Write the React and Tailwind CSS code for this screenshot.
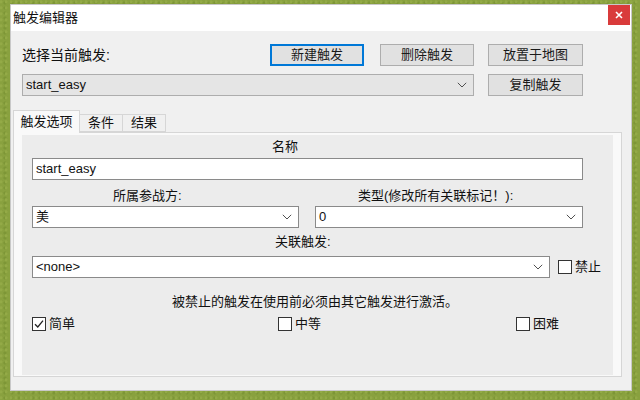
import React from 'react'

const font = "font-['Liberation_Sans','Noto_Sans_CJK_SC',sans-serif]"

function Chevron() {
  return (
    <svg width="10" height="6" viewBox="0 0 10 6" className="shrink-0">
      <path d="M0.8 0.8L5 5L9.2 0.8" stroke="#505050" strokeWidth="1" fill="none" />
    </svg>
  )
}

function Button({ children, focused, className = '' }) {
  return (
    <div
      className={`h-[22px] flex items-center justify-center text-[13px] text-[#1a1a1a] bg-[#e1e1e1] border ${
        focused ? 'border-[#0078d7] shadow-[inset_0_0_0_1px_#0078d7]' : 'border-[#adadad]'
      } ${className}`}
    >
      {children}
    </div>
  )
}

function Select({ value, className = '', gray }) {
  return (
    <div
      className={`h-[22px] flex items-center justify-between pl-[3px] pr-[6px] border text-[13px] text-[#111] ${
        gray ? 'bg-[#e5e5e5] border-[#adadad]' : 'bg-white border-[#8a8a8a]'
      } ${className}`}
    >
      <span>{value}</span>
      <Chevron />
    </div>
  )
}

function Check({ label, checked, className = '' }) {
  return (
    <div className={`flex items-center gap-[3px] ${className}`}>
      <div className="w-[14px] h-[14px] border border-[#333] bg-white flex items-center justify-center">
        {checked && (
          <svg width="12" height="12" viewBox="0 0 12 12">
            <path d="M2 6.2L4.8 9L10 2.6" stroke="#222" strokeWidth="1.3" fill="none" />
          </svg>
        )}
      </div>
      <span className="text-[13px] text-[#111] leading-[16px]">{label}</span>
    </div>
  )
}

export default function App() {
  return (
    <div
      className={`w-[640px] h-[400px] overflow-hidden pt-[4px] pl-[10px] bg-[#89a13f] ${font}`}
      style={{
        backgroundImage:
          'radial-gradient(circle at 20% 30%, #93aa47 0 1px, transparent 2px), radial-gradient(circle at 70% 60%, #7d9636 0 1px, transparent 2px)',
        backgroundSize: '5px 6px, 7px 5px',
      }}
    >
      <div className="w-[622px] h-[387px] bg-[#f0f0f0] border border-[#c8c8c8] flex flex-col">
        {/* Title bar */}
        <div className="h-[26px] bg-white flex items-start justify-between">
          <span className="pl-[2px] pt-[5px] text-[13px] text-[#111] leading-[16px]">触发编辑器</span>
          <div className="mr-[1px] w-[22px] h-[20px] bg-[#d93b3b] flex items-center justify-center">
            <svg width="8" height="8" viewBox="0 0 8 8">
              <path d="M1 1L7 7M7 1L1 7" stroke="#fff" strokeWidth="1.6" />
            </svg>
          </div>
        </div>

        {/* Top controls */}
        <div className="pl-[11px] pt-[13px]">
          <div className="flex items-center">
            <div className="w-[248px] text-[14px] text-[#111]">选择当前触发:</div>
            <Button focused className="w-[94px]">新建触发</Button>
            <Button className="w-[94px] ml-[16px]">删除触发</Button>
            <Button className="w-[95px] ml-[14px]">放置于地图</Button>
          </div>
          <div className="flex items-center mt-[8px]">
            <Select gray value="start_easy" className="w-[452px]" />
            <Button className="w-[95px] ml-[14px]">复制触发</Button>
          </div>
        </div>

        {/* Tabs */}
        <div className="pl-[2px] mt-[13px] flex items-end h-[23px]">
          <div className="w-[67px] h-[23px] bg-[#f9f9f9] border border-b-0 border-[#d6d6d6] flex items-center justify-center text-[13px] text-[#111] relative z-10 -mb-px">
            触发选项
          </div>
          <div className="w-[43px] h-[18px] bg-[#f0f0f0] border border-l-0 border-[#d6d6d6] flex items-center justify-center text-[13px] text-[#111]">
            条件
          </div>
          <div className="w-[43px] h-[18px] bg-[#f0f0f0] border border-l-0 border-[#d6d6d6] flex items-center justify-center text-[13px] text-[#111]">
            结果
          </div>
        </div>

        {/* Tab page */}
        <div className="ml-[2px] w-[609px] h-[245px] bg-[#f9f9f9] border border-[#d6d6d6]">
          <div className="ml-[8px] mt-[2px] w-[591px] h-[240px] bg-[#ececec] pl-[10px]">
            <div className="h-[23px] flex items-center pl-[240px] text-[13px] text-[#111]">名称</div>
            <div className="w-[551px] h-[22px] bg-white border border-[#8a8a8a] flex items-center pl-[3px] text-[13px] text-[#111]">
              start_easy
            </div>

            <div className="h-[26px] flex items-end pb-[2px] text-[13px] text-[#111] leading-[16px]">
              <div className="w-[283px] pl-[81px]">所属参战方:</div>
              <div className="pl-[43px]">类型(修改所有关联标记！):</div>
            </div>
            <div className="flex">
              <Select value="美" className="w-[267px]" />
              <Select value="0" className="w-[268px] ml-[16px]" />
            </div>

            <div className="h-[28px] flex items-center pl-[243px] text-[13px] text-[#111]">关联触发:</div>
            <div className="flex items-center">
              <Select value="<none>" className="w-[518px]" />
              <Check label="禁止" className="ml-[8px]" />
            </div>

            <div className="mt-[16px] h-[16px] leading-[16px] pl-[140px] text-[13px] text-[#111]">
              被禁止的触发在使用前必须由其它触发进行激活。
            </div>

            <div className="mt-[6px] h-[16px] flex items-center">
              <Check checked label="简单" className="w-[246px]" />
              <Check label="中等" className="w-[238px]" />
              <Check label="困难" />
            </div>
          </div>
        </div>
      </div>
    </div>
  )
}
